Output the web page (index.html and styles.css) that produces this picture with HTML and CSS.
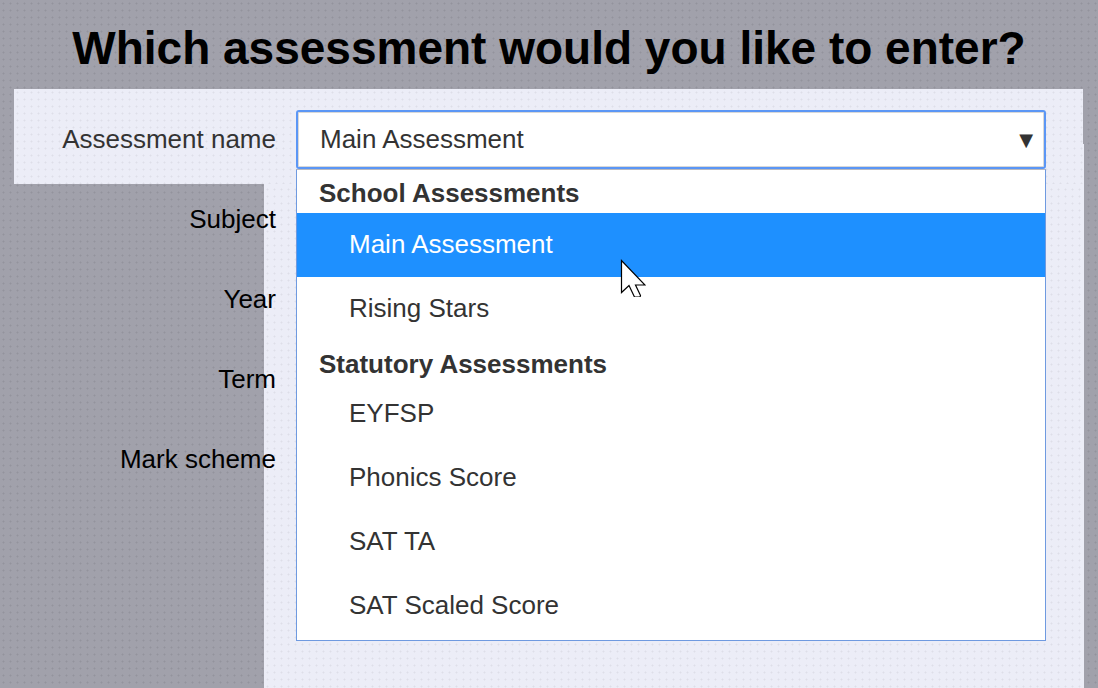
FILE: index.html
```html
<!DOCTYPE html>
<html lang="en">
<head>
  <meta charset="UTF-8">
  <title>Which assessment would you like to enter?</title>
  <link rel="stylesheet" href="styles.css">
</head>
<body>
  <div class="page">
    <h1 class="title">Which assessment would you like to enter?</h1>
    <!-- pale panel left behind the open dropdown -->
    <div class="under-panel"></div>
    <form class="form">
      <div class="row row-active">
        <label class="label">Assessment name</label>
        <div class="select-wrap">
          <div class="select">
            <span>Main Assessment</span>
            <span class="arrow">▼</span>
          </div>
          <ul class="menu">
            <li class="group group-first">School Assessments</li>
            <li class="option selected">Main Assessment</li>
            <li class="option">Rising Stars</li>
            <li class="group">Statutory Assessments</li>
            <li class="option">EYFSP</li>
            <li class="option">Phonics Score</li>
            <li class="option">SAT TA</li>
            <li class="option">SAT Scaled Score</li>
          </ul>
        </div>
      </div>
      <div class="row"><label class="label">Subject</label></div>
      <div class="row"><label class="label">Year</label></div>
      <div class="row"><label class="label">Term</label></div>
      <div class="row"><label class="label">Mark scheme</label></div>
    </form>
    <svg class="cursor" width="26" height="38" viewBox="0 0 26 38">
      <path d="M1.5 1.5V33.5L9 26.5L14.5 38H20L20.5 36.500L15.500 26H25Z" fill="#fff" stroke="#000" stroke-width="1.200"/>
    </svg>
  </div>
</body>
</html>
```

FILE: styles.css
```css
* {
  box-sizing: border-box;
}
html, body {
  margin: 0;
  padding: 0;
}
.page {
  position: relative;
  width: 1098px;
  height: 688px;
  overflow: hidden;
  background-color: #a1a1ab;
  background-image: radial-gradient(rgba(120, 120, 130, 0.35) 0.8px, transparent 1.2px);
  background-size: 7px 7px;
  font-family: "Liberation Sans", Arial, sans-serif;
}
.title {
  margin: 0;
  height: 89px;
  padding-top: 20px;
  text-align: center;
  font-size: 46px;
  line-height: 56px;
  font-weight: bold;
  color: #000;
}
.under-panel {
  position: absolute;
  left: 264px;
  top: 144px;
  width: 820px;
  height: 544px;
  background-color: #ecedf7;
  background-image: radial-gradient(rgba(200, 200, 210, 0.4) 0.8px, transparent 1.2px);
  background-size: 7px 7px;
}
.form {
  position: relative;
  display: flex;
  flex-direction: column;
  margin-left: 14px;
  width: 1069px;
}
.row {
  display: flex;
  align-items: center;
  height: 80px;
}
.row-active {
  height: 95px;
  padding: 21px 0 15px;
  margin-bottom: -5px;
  background-color: #ecedf7;
  background-image: radial-gradient(rgba(200, 200, 210, 0.4) 0.8px, transparent 1.2px);
  background-size: 7px 7px;
}
.label {
  width: 262px;
  text-align: right;
  font-size: 26px;
  color: #000;
}
.row-active .label {
  color: #333;
}
.select-wrap {
  position: relative;
  margin-left: 20px;
  width: 750px;
}
.select {
  display: flex;
  justify-content: space-between;
  align-items: center;
  height: 59px;
  padding: 0 11px 0 22px;
  border: 2px solid #5b96f5;
  border-radius: 3px;
  background: #fff;
  box-shadow: inset 0 0 0 1px #d8d8d8;
  font-size: 26px;
  color: #333;
}
.arrow {
  font-size: 18px;
  font-family: "DejaVu Sans", sans-serif;
}
.menu {
  position: absolute;
  left: 0;
  top: 59px;
  width: 100%;
  height: 472px;
  margin: 0;
  padding: 0;
  list-style: none;
  background: #fff;
  border: 1px solid #6f9ae0;
  border-top-color: #b9b9c0;
  font-size: 26px;
  color: #333;
}
.group {
  height: 41px;
  padding-left: 22px;
  line-height: 46px;
  font-weight: bold;
}
.group-first {
  height: 43px;
  line-height: 46px;
}
.option {
  height: 64px;
  padding-left: 52px;
  line-height: 62px;
}
.selected {
  background: #1e90ff;
  color: #fff;
}
.cursor {
  position: absolute;
  left: 620px;
  top: 259px;
}
```
